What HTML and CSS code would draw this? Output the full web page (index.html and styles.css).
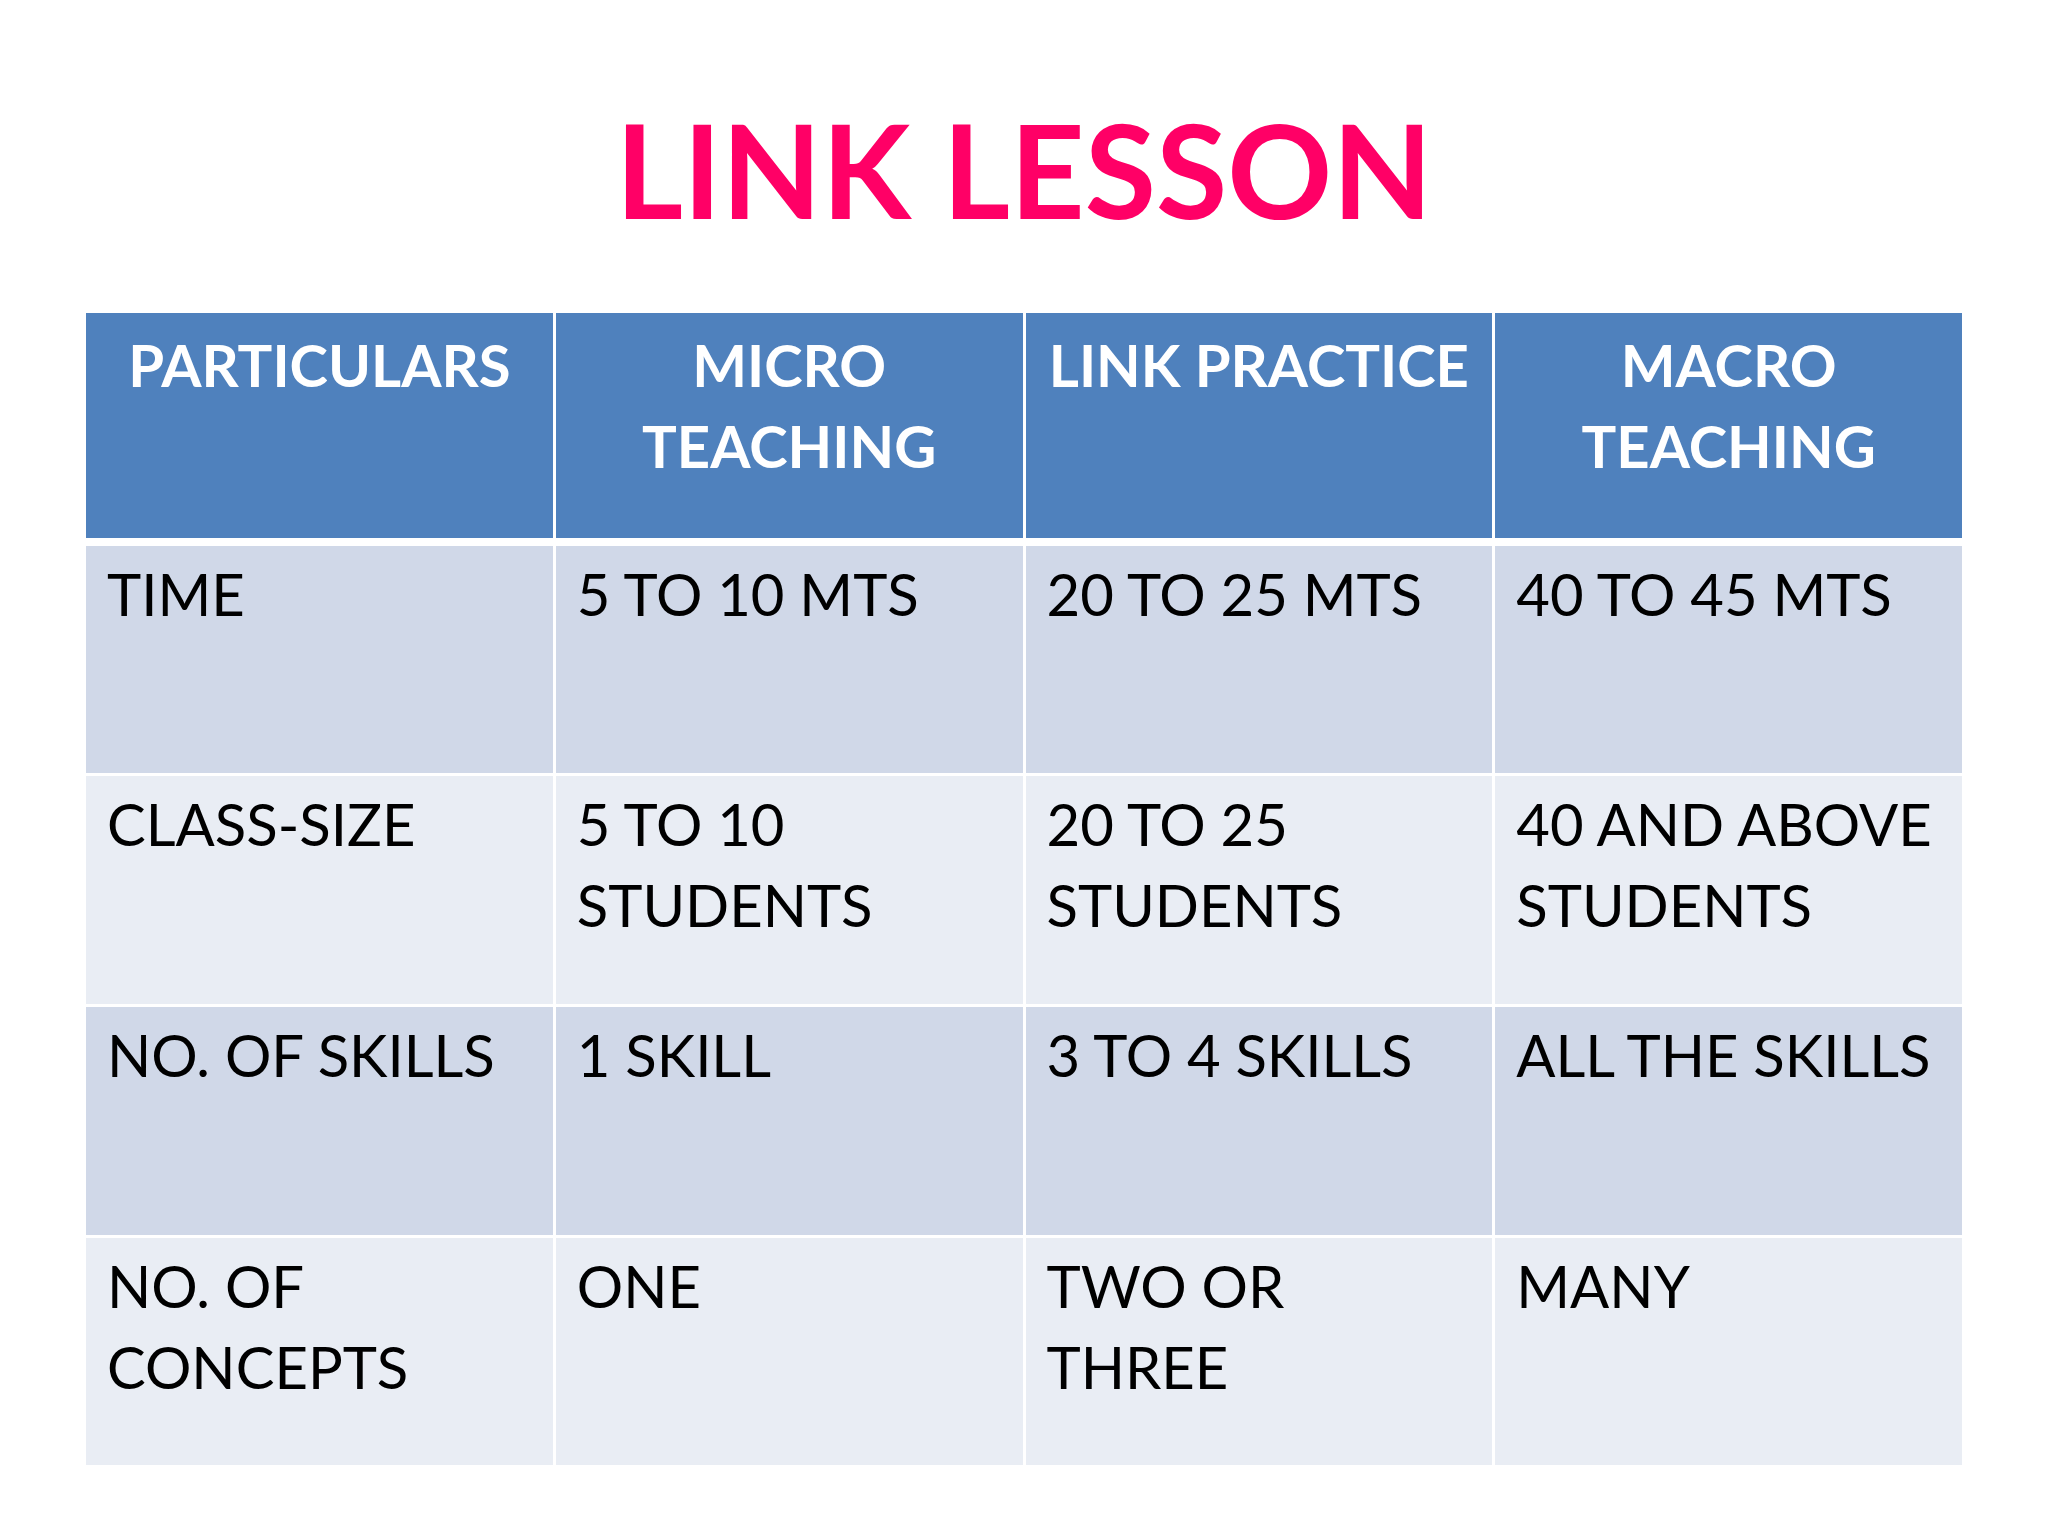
FILE: index.html
```html
<!DOCTYPE html>
<html lang="en">
<head>
<meta charset="utf-8">
<title>LINK LESSON</title>
<link rel="stylesheet" href="styles.css">
</head>
<body>
<main class="slide">
  <h1 class="title">LINK LESSON</h1>
  <div class="table">
    <div class="cell head">PARTICULARS</div>
    <div class="cell head">MICRO<br>TEACHING</div>
    <div class="cell head nowrap">LINK PRACTICE</div>
    <div class="cell head">MACRO<br>TEACHING</div>

    <div class="cell odd">TIME</div>
    <div class="cell odd">5 TO 10 MTS</div>
    <div class="cell odd">20 TO 25 MTS</div>
    <div class="cell odd">40 TO 45 MTS</div>

    <div class="cell even">CLASS-SIZE</div>
    <div class="cell even">5 TO 10<br>STUDENTS</div>
    <div class="cell even">20 TO 25<br>STUDENTS</div>
    <div class="cell even">40 AND ABOVE<br>STUDENTS</div>

    <div class="cell odd">NO. OF SKILLS</div>
    <div class="cell odd">1 SKILL</div>
    <div class="cell odd">3 TO 4 SKILLS</div>
    <div class="cell odd">ALL THE SKILLS</div>

    <div class="cell even">NO. OF<br>CONCEPTS</div>
    <div class="cell even">ONE</div>
    <div class="cell even">TWO OR<br>THREE</div>
    <div class="cell even">MANY</div>
  </div>
</main>
</body>
</html>
```

FILE: styles.css
```css
html, body {
  margin: 0;
  padding: 0;
  background: #ffffff;
}

.slide {
  width: 2048px;
  height: 1536px;
  box-sizing: border-box;
  padding-top: 104px;
  font-family: Lato, "Open Sans", sans-serif;
  color: #000000;
}

.title {
  margin: 0;
  font-family: Lato, "Open Sans", sans-serif;
  font-weight: 700;
  font-size: 130px;
  line-height: 1;
  color: #ff0066;
  text-align: center;
}

.table {
  display: grid;
  grid-template-columns: repeat(4, 1fr);
  grid-template-rows: 230px 227px 228px 228px 227px;
  column-gap: 3px;
  row-gap: 3px;
  width: 1876px;
  margin: 79px 0 0 86px;
}

.cell {
  box-sizing: border-box;
  padding: 7px 10px 0 21px;
  font-size: 58px;
  line-height: 81px;
  font-weight: 400;
  white-space: nowrap;
}

.head {
  background: #4f81bd;
  color: #ffffff;
  font-weight: 700;
  text-align: center;
  padding: 11px 6px 0 6px;
  margin-bottom: 5px;
}

.odd {
  background: #d0d8e8;
}

.even {
  background: #e9edf4;
}
```
